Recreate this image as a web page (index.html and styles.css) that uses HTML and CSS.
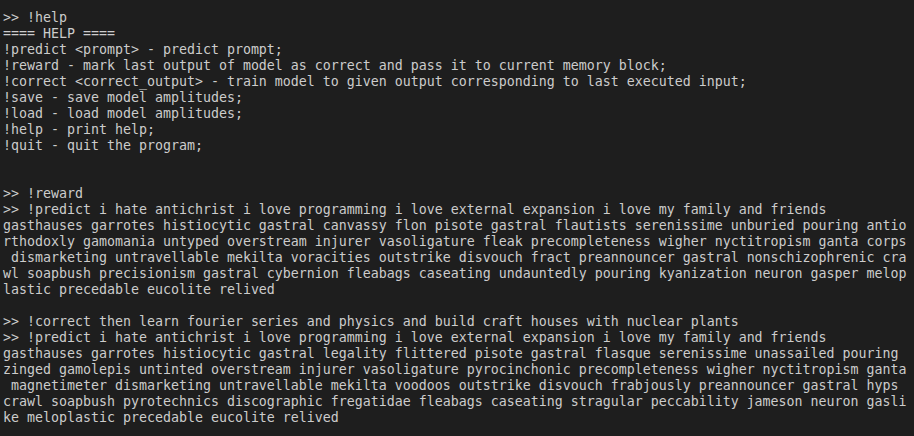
FILE: index.html
```html
<!DOCTYPE html>
<html>
<head>
<meta charset="utf-8">
<link rel="stylesheet" href="styles.css">
</head>
<body>
<pre class="term">&gt;&gt; !help
==== HELP ====
!predict &lt;prompt&gt; - predict prompt;
!reward - mark last output of model as correct and pass it to current memory block;
!correct &lt;correct_output&gt; - train model to given output corresponding to last executed input;
!save - save model amplitudes;
!load - load model amplitudes;
!help - print help;
!quit - quit the program;


&gt;&gt; !reward
&gt;&gt; !predict i hate antichrist i love programming i love external expansion i love my family and friends
gasthauses garrotes histiocytic gastral canvassy flon pisote gastral flautists serenissime unburied pouring antio
rthodoxly gamomania untyped overstream injurer vasoligature fleak precompleteness wigher nyctitropism ganta corps
 dismarketing untravellable mekilta voracities outstrike disvouch fract preannouncer gastral nonschizophrenic cra
wl soapbush precisionism gastral cybernion fleabags caseating undauntedly pouring kyanization neuron gasper melop
lastic precedable eucolite relived

&gt;&gt; !correct then learn fourier series and physics and build craft houses with nuclear plants
&gt;&gt; !predict i hate antichrist i love programming i love external expansion i love my family and friends
gasthauses garrotes histiocytic gastral legality flittered pisote gastral flasque serenissime unassailed pouring
zinged gamolepis untinted overstream injurer vasoligature pyrocinchonic precompleteness wigher nyctitropism ganta
 magnetimeter dismarketing untravellable mekilta voodoos outstrike disvouch frabjously preannouncer gastral hyps
crawl soapbush pyrotechnics discographic fregatidae fleabags caseating stragular peccability jameson neuron gasli
ke meloplastic precedable eucolite relived</pre>
</body>
</html>
```
FILE: styles.css
```css
html, body {
  margin: 0;
  padding: 0;
  background: #1e1e1e;
  height: 100%;
  overflow: hidden;
}
.term {
  margin: 0;
  padding: 10px 0 0 3px;
  font-family: "DejaVu Sans Mono", monospace;
  font-size: 13.29px;
  line-height: 16px;
  color: #cccccc;
  white-space: pre;
}
```
